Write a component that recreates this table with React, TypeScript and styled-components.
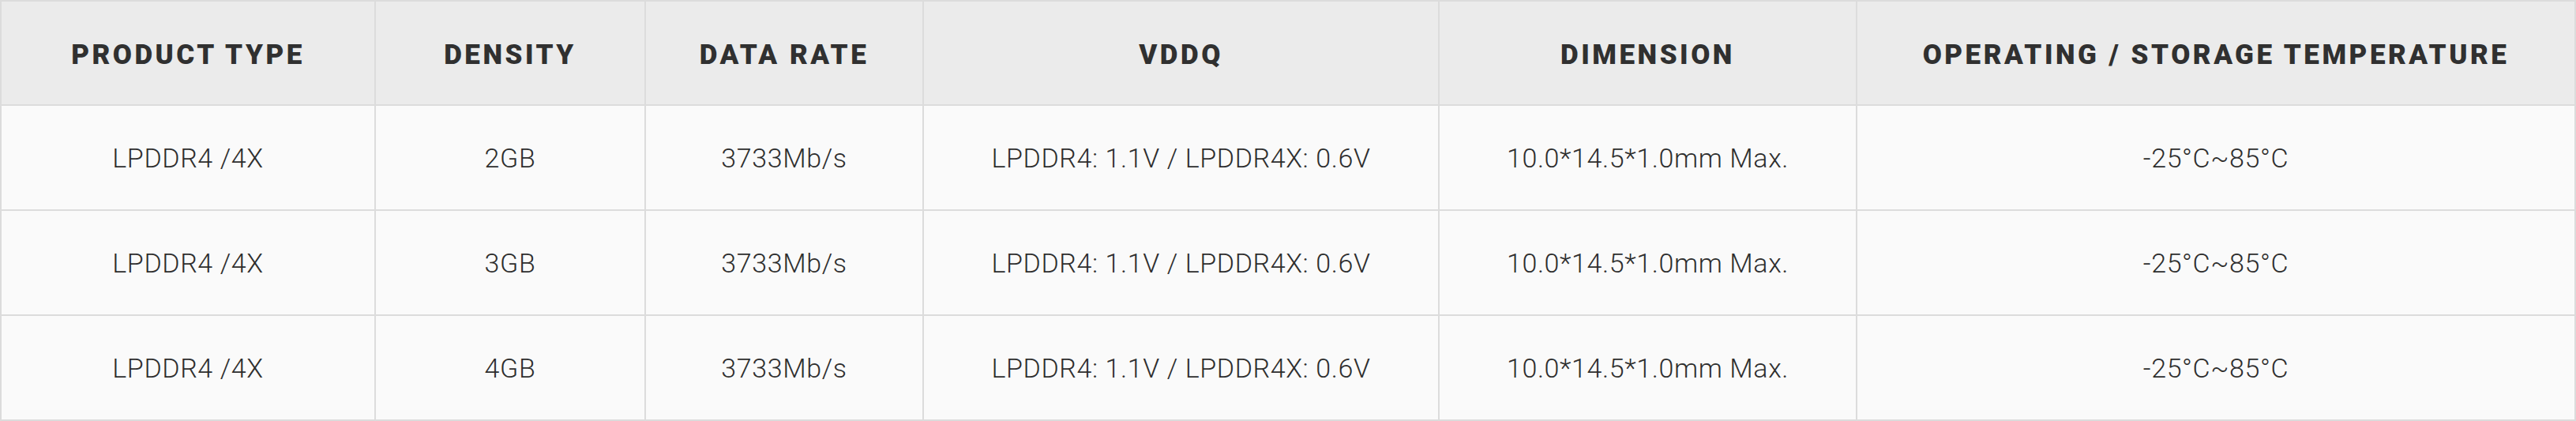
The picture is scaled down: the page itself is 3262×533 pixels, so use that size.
import React from 'react';
import styled, { createGlobalStyle } from 'styled-components';

// == data =========================================================================================
const columns = [
  { title: 'PRODUCT TYPE', width: 472 },
  { title: 'DENSITY', width: 340 },
  { title: 'DATA RATE', width: 350 },
  { title: 'VDDQ', width: 651 },
  { title: 'DIMENSION', width: 527 },
  { title: 'OPERATING / STORAGE TEMPERATURE', width: 908 },
];

const rows = [ '2GB', '3GB', '4GB' ].map( ( density ) => [
  'LPDDR4 /4X',
  density,
  '3733Mb/s',
  'LPDDR4: 1.1V / LPDDR4X: 0.6V',
  '10.0*14.5*1.0mm Max.',
  '-25°C~85°C',
] );

// == styles =======================================================================================
const GlobalStyle = createGlobalStyle`
  html, body {
    margin: 0;
    padding: 0;
    background: #ffffff;
  }
`;

const Table = styled.table`
  table-layout: fixed;
  width: 3262px;
  border-collapse: separate;
  border-spacing: 2px;
  background: #dcdcdc;
  color: #333333;
`;

const Col = styled.col<{ $width: number }>`
  width: ${ ( { $width } ) => $width }px;
`;

const HeadCell = styled.th`
  height: 130px;
  padding: 4px 0 0;
  box-sizing: border-box;
  background: #ebebeb;
  color: #303030;
  font-family: Roboto, "Liberation Sans", sans-serif;
  font-weight: 900;
  font-size: 35px;
  letter-spacing: 3.5px;
  text-align: center;
  vertical-align: middle;
`;

const BodyCell = styled.td`
  height: 131px;
  padding: 0;
  background: #fafafa;
  color: #2e2e2e;
  font-family: Roboto, "Liberation Sans", sans-serif;
  font-weight: 300;
  font-size: 34px;
  letter-spacing: 0.6px;
  text-align: center;
  vertical-align: middle;
`;

// == element ======================================================================================
const App = (): JSX.Element => (
  <>
    <GlobalStyle />
    <Table>
      <colgroup>
        { columns.map( ( column ) => <Col key={ column.title } $width={ column.width } /> ) }
      </colgroup>
      <thead>
        <tr>
          { columns.map( ( column ) => <HeadCell key={ column.title }>{ column.title }</HeadCell> ) }
        </tr>
      </thead>
      <tbody>
        { rows.map( ( row, i ) => (
          <tr key={ i }>
            { row.map( ( value, j ) => <BodyCell key={ j }>{ value }</BodyCell> ) }
          </tr>
        ) ) }
      </tbody>
    </Table>
  </>
);

export default App;
